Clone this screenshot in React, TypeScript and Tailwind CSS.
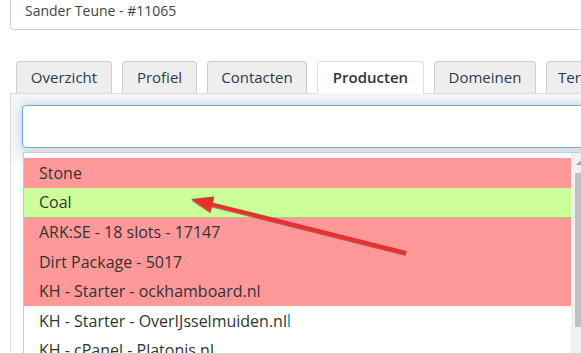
const tabs: { label: string; w: string }[] = [
  { label: "Overzicht", w: "w-[96px] text-center" },
  { label: "Profiel", w: "w-[75px] text-center" },
  { label: "Contacten", w: "w-[100px] text-center" },
  { label: "Producten", w: "w-[107px] text-center" },
  { label: "Domeinen", w: "w-[102px] text-center" },
  { label: "Termijnen", w: "w-[100px] pl-[11px] text-left" },
];

const rows: { label: string; tone: "red" | "green" | "white" }[] = [
  { label: "Stone", tone: "red" },
  { label: "Coal", tone: "green" },
  { label: "ARK:SE - 18 slots - 17147", tone: "red" },
  { label: "Dirt Package - 5017", tone: "red" },
  { label: "KH - Starter - ockhamboard.nl", tone: "red" },
  { label: "KH - Starter - OverIJsselmuiden.nl", tone: "white" },
  { label: "KH - cPanel - Platonis.nl", tone: "white" },
];

const toneClass = {
  red: "bg-[#ff9999]",
  green: "bg-[#ccff99]",
  white: "bg-white",
};

function Arrow() {
  return (
    <svg className="absolute left-0 top-0 pointer-events-none" width={581} height={353}>
      <line x1={406} y1={254} x2={212} y2={205.5} stroke="#6b4a4a" strokeWidth={4} opacity={0.6} />
      <polygon points="191,200.5 214.2,198 210.4,213.5" fill="#6b4a4a" opacity={0.6} />
      <line x1={406} y1={253} x2={212} y2={204.4} stroke="#e8302f" strokeWidth={4} />
      <polygon points="191,199 214.2,196.6 210.4,212.2" fill="#e8302f" />
    </svg>
  );
}

export default function App() {
  return (
    <div className="relative w-[581px] h-[353px] overflow-hidden bg-white font-['Open_Sans',sans-serif] text-[16px] text-[#333]">
      <div className="ml-[10px] mt-[-11px] w-[640px] h-[41px] border border-[#ccc] rounded-[4px] px-[14px] pt-[11px] leading-[20px] text-[14px] text-[#444]">
        Sander Teune - #11065
      </div>

      <div className="mt-[31px] ml-[16px] flex items-end gap-[10px]">
        {tabs.map((t) => (
          <div
            key={t.label}
            className={
              t.label === "Producten"
                ? `${t.w} h-[33px] border border-b-0 border-[#ddd] rounded-t-[4px] bg-white leading-[31px] text-[15px] font-semibold text-[#333] shrink-0 -mb-px relative z-10`
                : `${t.w} h-[32px] border border-b-0 border-[#ccc] rounded-t-[4px] bg-[#eee] leading-[30px] text-[15px] text-[#2b3a4c] shrink-0 overflow-hidden whitespace-nowrap`
            }
          >
            {t.label}
          </div>
        ))}
      </div>

      <div className="ml-[10px] w-[660px] h-[300px] border-l border-t border-[#ddd] bg-[linear-gradient(#f4f5f6_0px,#f4f5f6_62px,#ffffff_72px)] pl-[11px] pt-[11px]">
        <div className="h-[43px] w-[620px] border border-[#66afe9] rounded-[4px] bg-white shadow-[0_0_8px_rgba(102,175,233,0.55)]" />

        <div className="mt-[4px] ml-px flex w-[580px] border-t border-l border-[#ccc] bg-white shadow-[0_-1px_3px_rgba(0,0,0,0.08)]">
          <div className="w-[547px] pt-[5px]">
            {rows.map((r) => (
              <div
                key={r.label}
                className={`${toneClass[r.tone]} h-[29.6px] flex items-center pl-[15px] whitespace-nowrap text-[#333]`}
              >
                {r.label}
                {r.label === "KH - Starter - OverIJsselmuiden.nl" && (
                  <span className="ml-[1px] w-[2px] h-[13px] bg-[#5aa9e6]" />
                )}
              </div>
            ))}
          </div>
          <div className="w-[17px] bg-[#f1f1f1] flex flex-col items-center pt-[8px]">
            <div className="w-0 h-0 border-l-[4px] border-r-[4px] border-b-[4px] border-l-transparent border-r-transparent border-b-[#a3a3a3]" />
            <div className="mt-[8px] w-[13px] h-[154px] bg-[#c1c1c1] ml-[4px]" />
          </div>
        </div>
      </div>

      <Arrow />
    </div>
  );
}
